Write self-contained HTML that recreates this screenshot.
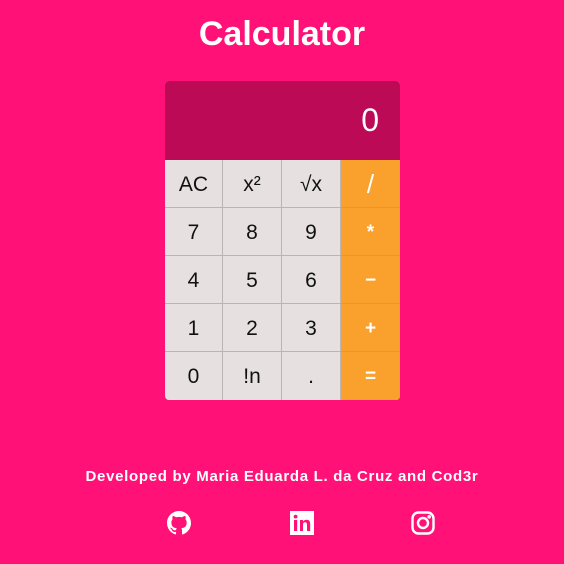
<!DOCTYPE html>
<html><head><meta charset="utf-8"><style>
body{margin:0;width:564px;height:564px;background:#ff1177;font-family:"Liberation Sans",sans-serif;position:relative;overflow:hidden}
h1{position:absolute;top:15px;left:0;width:564px;text-align:center;margin:0;color:#fff;font-size:34px;font-weight:bold;letter-spacing:0}
.calc{position:absolute;left:165px;top:81px;width:235px;height:319px;border-radius:4px;overflow:hidden;background:#e6e1e0}
.disp{height:79px;background:#bc0a56;color:#fff;font-size:32px;text-align:right;box-sizing:border-box;padding:21px 21px 0 0}
.grid{display:grid;grid-template-columns:58px 59px 59px 59px;grid-template-rows:repeat(5,48px)}
.grid div{box-sizing:border-box;border-right:1px solid #b9b5b4;border-bottom:1px solid #b9b5b4;display:flex;align-items:center;justify-content:center;font-size:21px;color:#111;padding-top:2px}
.grid div.o{background:#f9a02d;color:#fff;border-right:none;border-bottom-color:#c99a6a;font-size:19px;font-weight:bold}
.grid div:nth-last-child(-n+4){border-bottom:none}
.foot{position:absolute;top:468px;left:0;width:564px;text-align:center;color:#fff;font-size:15px;font-weight:bold;letter-spacing:0.7px}
svg{position:absolute;top:511px}
</style></head><body>
<h1>Calculator</h1>
<div class="calc"><div class="disp">0</div>
<div class="grid">
<div>AC</div><div>x²</div><div>√x</div><div class="o" style="font-size:26px;font-weight:normal">/</div>
<div>7</div><div>8</div><div>9</div><div class="o">*</div>
<div>4</div><div>5</div><div>6</div><div class="o">−</div>
<div>1</div><div>2</div><div>3</div><div class="o">+</div>
<div>0</div><div>!n</div><div>.</div><div class="o">=</div>
</div></div>
<div class="foot">Developed by Maria Eduarda L. da Cruz and Cod3r</div>
<svg style="left:167px" width="24" height="24" viewBox="0 0 16 16"><path fill="#fff" d="M8 0C3.58 0 0 3.58 0 8c0 3.54 2.29 6.53 5.47 7.59.4.07.55-.17.55-.38v-1.33c-2.23.48-2.7-1.07-2.7-1.07-.36-.92-.89-1.17-.89-1.17-.73-.5.06-.49.06-.49.8.06 1.23.83 1.23.83.72 1.23 1.87.87 2.33.66.07-.52.28-.87.51-1.07-1.78-.2-3.64-.89-3.64-3.95 0-.87.31-1.59.82-2.15-.08-.2-.36-1.02.08-2.12 0 0 .67-.21 2.2.82a7.6 7.6 0 0 1 4 0c1.53-1.04 2.2-.82 2.2-.82.44 1.1.16 1.92.08 2.12.51.56.82 1.27.82 2.15 0 3.07-1.87 3.750-3.65 3.95.29.25.54.73.54 1.48v2.2c0 .21.15.46.55.38A8 8 0 0 0 16 8c0-4.42-3.58-8-8-8z"/></svg>
<svg style="left:290px" width="24" height="24" viewBox="0 0 24 24"><rect width="24" height="24" fill="#fff"/><rect x="4" y="9" width="3.2" height="11" fill="#ff1177"/><circle cx="5.6" cy="5.6" r="1.9" fill="#ff1177"/><path fill="#ff1177" d="M10 9h3v1.6c.6-1 1.8-1.9 3.6-1.9 3 0 3.6 2 3.6 4.6V20h-3.2v-5.8c0-1.4-.1-3-1.9-3s-2.1 1.4-2.1 2.9V20H10z"/></svg>
<svg style="left:411px" width="24" height="24" viewBox="0 0 24 24" fill="none" stroke="#fff" stroke-width="2.4"><rect x="1.5" y="1.5" width="21" height="21" rx="6"/><circle cx="12" cy="12" r="5"/><circle cx="18.2" cy="5.8" r="0.6" fill="#fff"/></svg>
</body></html>
